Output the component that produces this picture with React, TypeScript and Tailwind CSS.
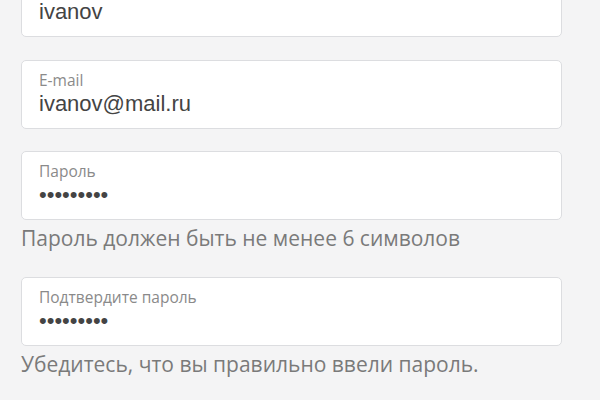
import { useState } from 'react';

interface FieldProps {
  label: string;
  value: string;
  type?: 'text' | 'email' | 'password';
  hint?: string;
  className?: string;
}

function Field({ label, value, type = 'text', hint, className = '' }: FieldProps) {
  const [val, setVal] = useState(value);

  return (
    <div className={className}>
      <label className="flex h-[69px] flex-col rounded-[5px] border border-[#dcdde0] bg-white pl-[17px] pr-4 pt-[9px]">
        <span className="font-['Open_Sans',sans-serif] text-[15.5px] leading-[20px] text-[#8a8a8a]">{label}</span>
        <input
          type={type}
          value={val}
          onChange={e => setVal(e.target.value)}
          className="h-[28px] w-full bg-transparent p-0 font-['Liberation_Sans',Arial,sans-serif] text-[22px] leading-[28px] text-[#444] outline-none"
        />
      </label>
      {hint && (
        <p className="mt-[3px] font-['Open_Sans',sans-serif] text-[21px] leading-[30px] text-[#7a7a7a]">{hint}</p>
      )}
    </div>
  );
}

export default function App() {
  return (
    <div className="h-screen overflow-hidden bg-[#f4f4f5]">
      <div className="-mt-[32px] ml-[21px] flex w-[541px] flex-col">
        <Field label="Логин" value="ivanov" />
        <Field className="mt-[23px]" label="E-mail" type="email" value="ivanov@mail.ru" />
        <Field className="mt-[22px]" label="Пароль" type="password" value="123456789" hint="Пароль должен быть не менее 6 символов" />
        <Field className="mt-[24px]" label="Подтвердите пароль" type="password" value="123456789" hint="Убедитесь, что вы правильно ввели пароль." />
      </div>
    </div>
  );
}
